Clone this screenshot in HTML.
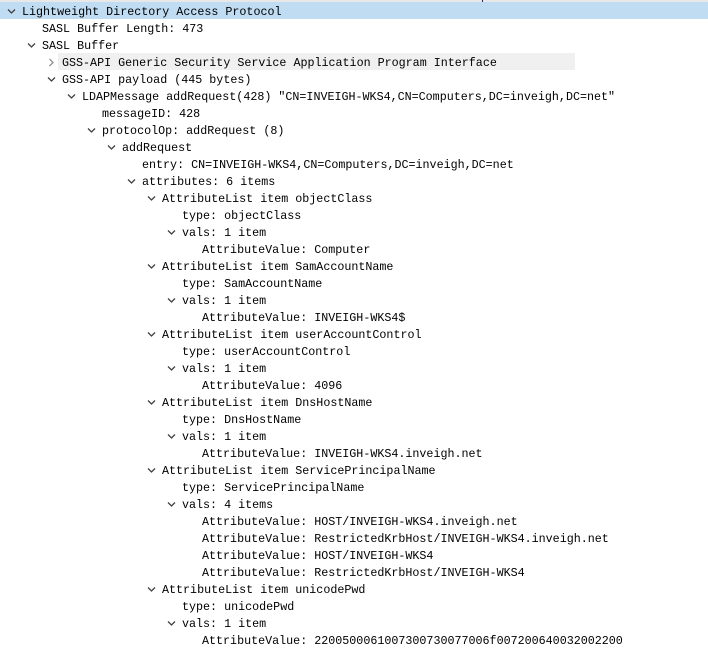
<!DOCTYPE html>
<html><head><meta charset="utf-8"><style>
html,body{margin:0;padding:0;background:#fff;width:708px;height:651px;overflow:hidden;position:relative}
.top{position:absolute;left:0;top:0;width:708px;height:2px;background:#e8e8e8}
.r{position:absolute;height:17px;line-height:17px;font-family:"Liberation Mono",monospace;font-size:11.7px;color:#000;white-space:pre}
.a{position:absolute;width:9px;height:9px}
.hl{position:absolute;left:0;width:708px;height:17px;background:#c0dcf2}
.hv{position:absolute;left:58px;width:517px;height:17px;background:#f0f0f0}
</style></head><body>
<div class="top"></div>
<div style="position:absolute;left:482px;top:0;width:1px;height:2px;background:#22208a"></div>
<div class="hl" style="top:2px"></div>
<div class="hv" style="top:53px"></div>
<div id="t"></div>
<script>
var rows=[[0,1,"Lightweight Directory Access Protocol"],[1,0,"SASL Buffer Length: 473"],[1,1,"SASL Buffer"],[2,2,"GSS-API Generic Security Service Application Program Interface"],[2,1,"GSS-API payload (445 bytes)"],[3,1,"LDAPMessage addRequest(428) \"CN=INVEIGH-WKS4,CN=Computers,DC=inveigh,DC=net\""],[4,0,"messageID: 428"],[4,1,"protocolOp: addRequest (8)"],[5,1,"addRequest"],[6,0,"entry: CN=INVEIGH-WKS4,CN=Computers,DC=inveigh,DC=net"],[6,1,"attributes: 6 items"],
[7,1,"AttributeList item objectClass"],[8,0,"type: objectClass"],[8,1,"vals: 1 item"],[9,0,"AttributeValue: Computer"],
[7,1,"AttributeList item SamAccountName"],[8,0,"type: SamAccountName"],[8,1,"vals: 1 item"],[9,0,"AttributeValue: INVEIGH-WKS4$"],
[7,1,"AttributeList item userAccountControl"],[8,0,"type: userAccountControl"],[8,1,"vals: 1 item"],[9,0,"AttributeValue: 4096"],
[7,1,"AttributeList item DnsHostName"],[8,0,"type: DnsHostName"],[8,1,"vals: 1 item"],[9,0,"AttributeValue: INVEIGH-WKS4.inveigh.net"],
[7,1,"AttributeList item ServicePrincipalName"],[8,0,"type: ServicePrincipalName"],[8,1,"vals: 4 items"],[9,0,"AttributeValue: HOST/INVEIGH-WKS4.inveigh.net"],[9,0,"AttributeValue: RestrictedKrbHost/INVEIGH-WKS4.inveigh.net"],[9,0,"AttributeValue: HOST/INVEIGH-WKS4"],[9,0,"AttributeValue: RestrictedKrbHost/INVEIGH-WKS4"],
[7,1,"AttributeList item unicodePwd"],[8,0,"type: unicodePwd"],[8,1,"vals: 1 item"],[9,0,"AttributeValue: 2200500061007300730077006f007200640032002200"]];
var h="";
rows.forEach(function(r,i){var top=2+17*i,x=22+20*r[0];
h+='<div class="r" style="left:'+x+'px;top:'+(top+2)+'px">'+r[2].replace(/</g,"&lt;")+'</div>';
if(r[1]==1)h+='<svg class="a" style="left:'+(x-15)+'px;top:'+(top+5)+'px" viewBox="0 0 9 9"><path d="M1 2.5 L4.5 6 L8 2.5" fill="none" stroke="#404040" stroke-width="1.3"/></svg>';
if(r[1]==2)h+='<svg class="a" style="left:'+(x-15)+'px;top:'+(top+5)+'px" viewBox="0 0 9 9"><path d="M2.5 1 L6 4.5 L2.5 8" fill="none" stroke="#909090" stroke-width="1.3"/></svg>';
});
document.getElementById("t").innerHTML=h;
</script>
</body></html>
